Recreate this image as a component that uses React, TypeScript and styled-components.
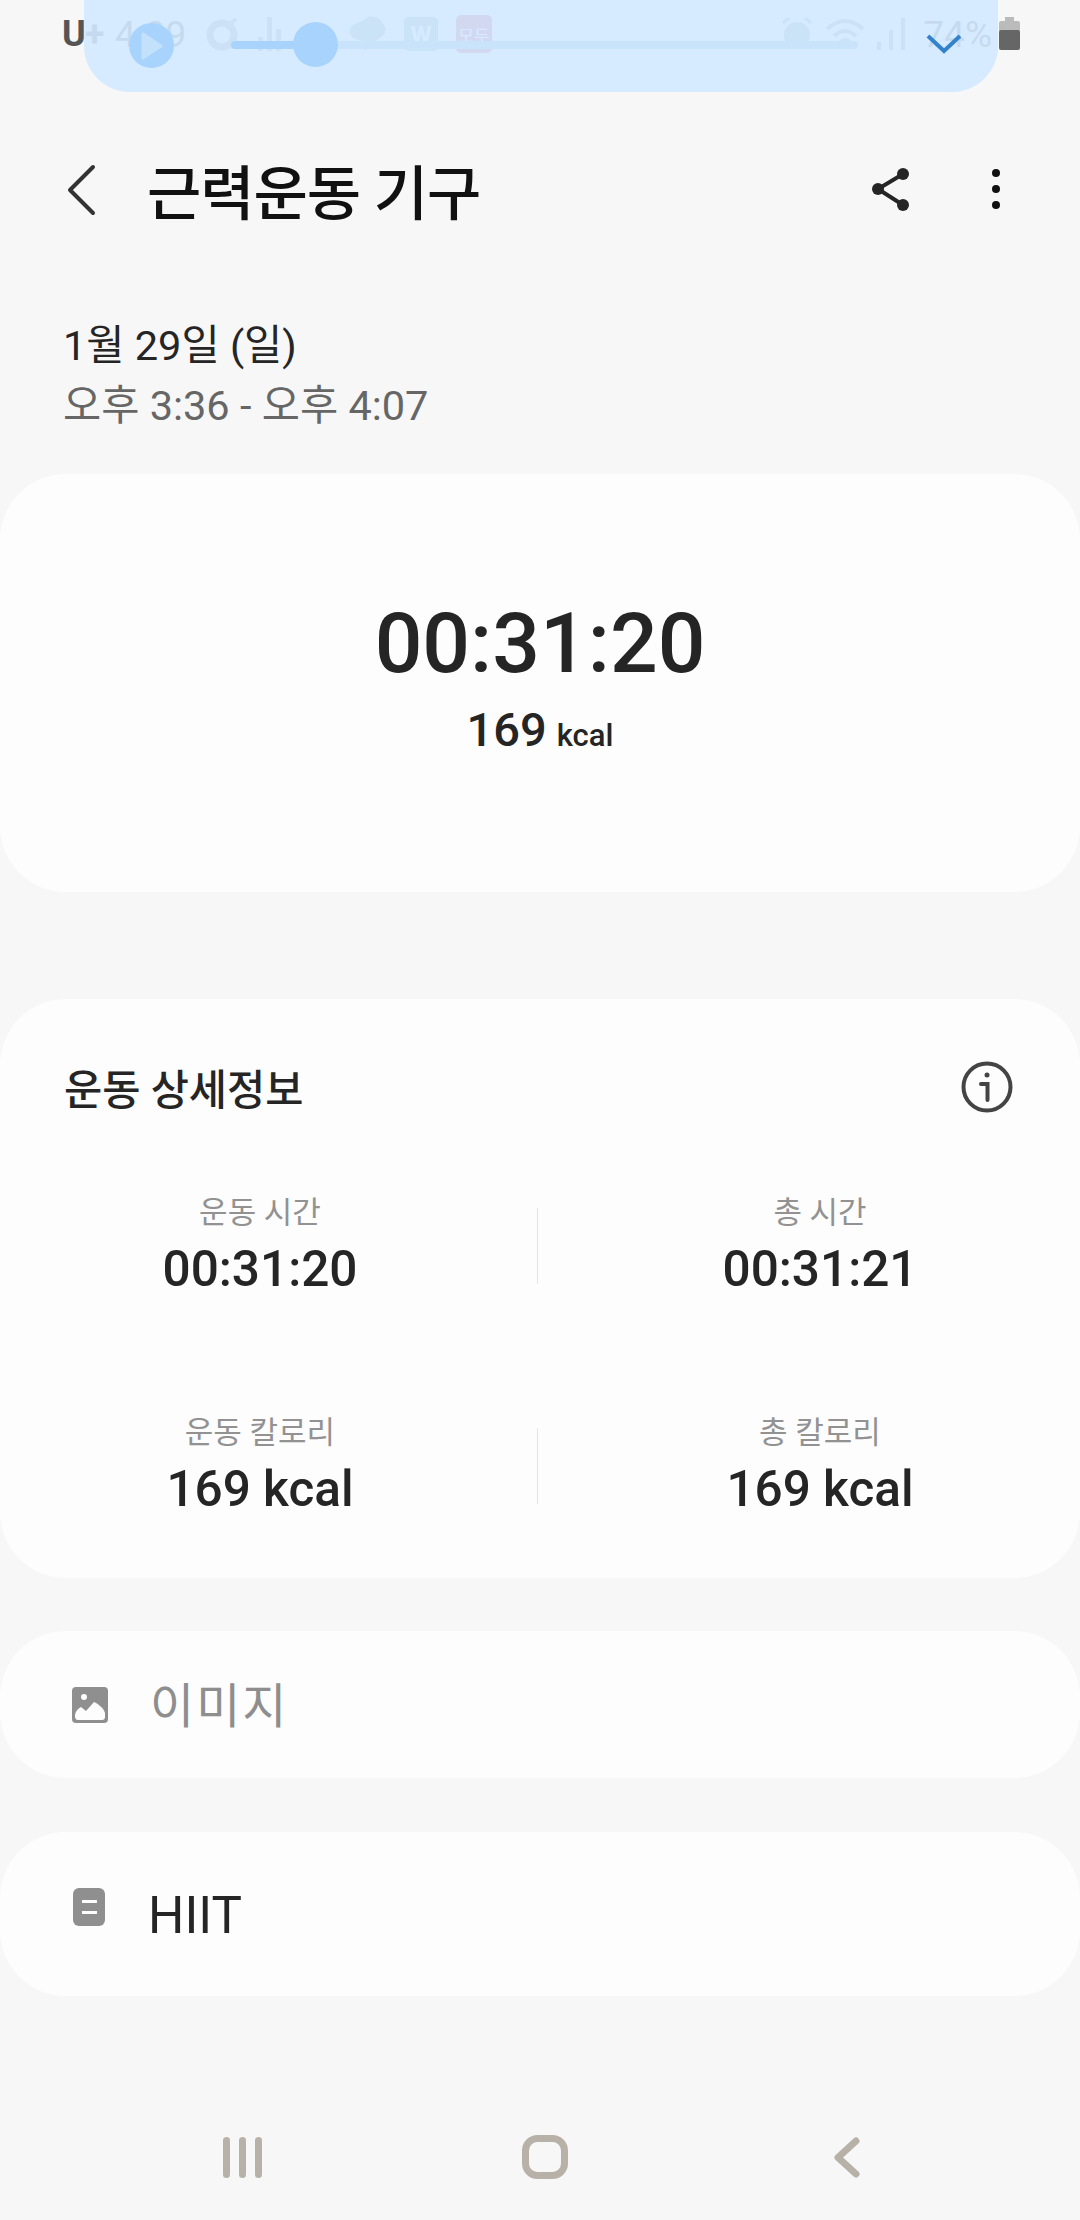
import React from "react";
import styled, { createGlobalStyle } from "styled-components";

const Global = createGlobalStyle`
  html, body { margin: 0; padding: 0; background: #f7f7f7; }
  body { font-family: Roboto, "Noto Sans CJK KR", sans-serif; }
  * { box-sizing: border-box; }
`;

const Page = styled.div`
  position: relative;
  width: 1080px;
  height: 2220px;
  overflow: hidden;
  background: #f7f7f7;
  display: flex;
  flex-direction: column;
`;

const StatusBar = styled.div`
  height: 64px;
  flex: none;
  display: flex;
  align-items: center;
  padding: 4px 60px 0 62px;
  color: #555;
`;
const Carrier = styled.span`
  font-size: 36px;
  font-weight: 700;
  width: 53px;
  letter-spacing: -1px;
`;
const Clock = styled.span`
  font-size: 37px;
  margin-right: 20px;
`;
const StatusIcons = styled.div<{ $gap: number }>`
  display: flex;
  align-items: center;
  gap: ${(p) => p.$gap}px;
`;
const Spacer = styled.div`
  flex: 1;
`;
const Battery = styled.span`
  margin-left: 7px;
  display: flex;
`;
const Percent = styled.span`
  font-size: 37px;
  margin-left: 16px;
`;

const Overlay = styled.div`
  position: absolute;
  left: 84px;
  top: 0;
  width: 914px;
  height: 92px;
  background: rgba(209, 233, 255, 0.9);
  border-radius: 0 0 46px 46px;
`;
const PlayButton = styled.div`
  position: absolute;
  left: 45px;
  top: 23px;
  width: 45px;
  height: 45px;
  border-radius: 50%;
  background: #a8d3fd;
  display: flex;
  align-items: center;
  justify-content: center;
`;
const SliderTrack = styled.div`
  position: absolute;
  left: 147px;
  top: 41px;
  width: 627px;
  height: 8px;
  border-radius: 4px;
  background: #c9e3fa;
`;
const SliderFill = styled.div`
  height: 100%;
  border-radius: 4px;
  background: #a8d3fd;
`;
const SliderThumb = styled.div`
  position: absolute;
  left: 62px;
  top: -19px;
  width: 45px;
  height: 45px;
  border-radius: 50%;
  background: #a8d3fd;
`;
const Collapse = styled.svg`
  position: absolute;
  left: 842px;
  top: 33px;
`;

const Header = styled.header`
  height: 250px;
  flex: none;
  display: flex;
  align-items: center;
  padding: 0 0 0 65px;
`;
const Title = styled.h1`
  margin: 0 0 0 50px;
  font-size: 59px;
  font-weight: 500;
  color: #111;
  flex: 1;
  letter-spacing: -1px;
`;
const HeaderActions = styled.div`
  display: flex;
  align-items: center;
  gap: 81px;
  padding-right: 80px;
`;
const BackIcon = styled.svg`
  flex: none;
  margin-top: 2px;
`;

const DateBlock = styled.div`
  padding: 2px 63px 0;
  height: 160px;
  flex: none;
`;
const DateLine = styled.div`
  font-size: 41.5px;
  line-height: 60px;
  color: #252525;
`;
const TimeLine = styled.div`
  font-size: 41.5px;
  line-height: 60px;
  color: #666;
`;

const Card = styled.section`
  background: #fdfdfd;
  border-radius: 66px;
`;
const SummaryCard = styled(Card)`
  height: 418px;
  margin-bottom: 107px;
  display: flex;
  flex-direction: column;
  align-items: center;
  padding-top: 122px;
`;
const Duration = styled.div`
  font-size: 84px;
  font-weight: 500;
  line-height: 96px;
  color: #252525;
`;
const Calories = styled.div`
  font-size: 47px;
  font-weight: 500;
  line-height: 60px;
  margin-top: 8px;
  color: #252525;
`;
const Unit = styled.span`
  font-size: 31px;
  margin-left: 10px;
`;

const DetailCard = styled(Card)`
  height: 579px;
  margin-bottom: 53px;
  padding-top: 56px;
`;
const DetailHeader = styled.div`
  display: flex;
  align-items: center;
  justify-content: space-between;
  height: 64px;
  padding: 0 67px 0 64px;
`;
const DetailTitle = styled.h2`
  margin: 0;
  font-size: 41.5px;
  font-weight: 500;
  color: #252525;
`;
const StatRow = styled.div<{ $top: number }>`
  display: grid;
  grid-template-columns: 520px 34px 532px;
  align-items: center;
  margin-top: ${(p) => p.$top}px;
`;
const Stat = styled.div`
  display: flex;
  flex-direction: column;
  align-items: center;
`;
const StatLabel = styled.div`
  font-size: 31px;
  line-height: 44px;
  color: #929292;
`;
const StatValue = styled.div`
  font-size: 49.5px;
  font-weight: 500;
  line-height: 68px;
  color: #252525;
`;
const Divider = styled.div`
  justify-self: center;
  width: 1px;
  height: 76px;
  margin-top: -2px;
  background: #e4e4e4;
`;

const ListRow = styled(Card)<{ $h: number; $mb: number }>`
  height: ${(p) => p.$h}px;
  margin-bottom: ${(p) => p.$mb}px;
  display: flex;
  align-items: center;
  padding-left: 72px;
`;
const ImageIcon = styled.svg`
  flex: none;
  margin-right: 42px;
`;
const NoteIcon = styled.svg`
  flex: none;
  margin: -14px 41px 0 1px;
`;
const RowPlaceholder = styled.span`
  font-size: 48px;
  color: #8e8e8e;
  letter-spacing: 2px;
  margin-top: -5px;
`;
const RowText = styled.span`
  font-size: 51px;
  color: #252525;
  margin-top: 2px;
`;

const NavBar = styled.nav`
  margin-top: auto;
  height: 85px;
  flex: none;
  padding: 0 0 0 92px;
  display: grid;
  grid-template-columns: repeat(3, 302px);
  justify-items: center;
  align-items: center;
  padding-bottom: 42px;
`;

const stats = [
  [
    { label: "운동 시간", value: "00:31:20" },
    { label: "총 시간", value: "00:31:21" },
  ],
  [
    { label: "운동 칼로리", value: "169 kcal" },
    { label: "총 칼로리", value: "169 kcal" },
  ],
];

export default function App() {
  return (
    <Page>
      <Global />
      <StatusBar>
        <Carrier>U+</Carrier>
        <Clock>4:09</Clock>
        <StatusIcons $gap={18}>
          <svg width="34" height="36" viewBox="0 0 34 36">
            <circle cx="16" cy="19" r="12" fill="none" stroke="#999" strokeWidth="7" />
            <path d="M20 12 L30 3" stroke="#999" strokeWidth="4" />
          </svg>
          <svg width="24" height="34" viewBox="0 0 24 34" fill="#999">
            <rect x="0" y="20" width="5" height="14" />
            <rect x="9" y="0" width="5" height="34" />
            <rect x="18" y="12" width="5" height="22" />
          </svg>
          <svg width="30" height="34" viewBox="0 0 30 34" fill="#999">
            <path d="M4 30 L24 6 L28 10 L12 34 Z" />
          </svg>
          <svg width="38" height="38" viewBox="0 0 38 38" fill="#8aa">
            <path d="M20 2 C30 0 34 6 38 14 C36 24 26 24 24 30 L16 36 L18 26 C6 26 0 20 2 14 C4 8 14 8 20 2 Z" />
          </svg>
          <svg width="34" height="34" viewBox="0 0 34 34">
            <rect width="34" height="34" rx="5" fill="#8aa" />
            <text x="17" y="26" textAnchor="middle" fontSize="24" fontWeight="700" fill="#fff" fontFamily="Roboto">W</text>
          </svg>
          <svg width="36" height="38" viewBox="0 0 36 38">
            <rect width="36" height="38" rx="5" fill="#d0406a" />
            <text x="18" y="27" textAnchor="middle" fontSize="17" fill="#fff" fontFamily="Noto Sans CJK KR">모두</text>
          </svg>
        </StatusIcons>
        <Spacer />
        <StatusIcons $gap={12}>
          <svg width="32" height="34" viewBox="0 0 32 34" fill="#8aa">
            <circle cx="16" cy="18" r="13" />
            <path d="M2 6 L8 1 M30 6 L24 1" stroke="#8aa" strokeWidth="3" />
          </svg>
          <svg width="40" height="34" viewBox="0 0 40 34" fill="none" stroke="#999" strokeWidth="4">
            <path d="M2 12 Q20 -4 38 12 M9 19 Q20 9 31 19 M15 25 Q20 21 25 25" />
          </svg>
          <svg width="30" height="32" viewBox="0 0 30 32" fill="#999">
            <rect x="0" y="24" width="4" height="8" />
            <rect x="12" y="12" width="4" height="20" />
            <rect x="24" y="0" width="4" height="32" />
          </svg>
        </StatusIcons>
        <Percent>74%</Percent>
        <Battery>
          <svg width="21" height="34" viewBox="0 0 21 34">
            <rect x="6" y="0" width="9" height="4" fill="#bbb" />
            <rect x="0" y="4" width="21" height="11" rx="2" fill="#bbb" />
            <rect x="0" y="13" width="21" height="20" rx="2" fill="#666" />
          </svg>
        </Battery>
      </StatusBar>
      <Overlay>
        <PlayButton>
          <svg width="24" height="30" viewBox="0 0 24 30">
            <path d="M3 3 L21 15 L3 27 Z" fill="#c4e1fb" stroke="#c4e1fb" strokeWidth="3" strokeLinejoin="round" />
          </svg>
        </PlayButton>
        <SliderTrack>
          <SliderFill style={{ width: "14%" }} />
          <SliderThumb />
        </SliderTrack>
        <Collapse width="36" height="22" viewBox="0 0 36 22" fill="none" stroke="#3383cc" strokeWidth="4">
          <path d="M2 3 L18 18 L34 3" />
        </Collapse>
      </Overlay>

      <Header>
        <BackIcon width="32" height="52" viewBox="0 0 32 52" fill="none" stroke="#333" strokeWidth="4" strokeLinecap="round" strokeLinejoin="round">
          <path d="M28 3 L5 26 L28 49" />
        </BackIcon>
        <Title>근력운동 기구</Title>
        <HeaderActions>
          <svg width="40" height="44" viewBox="0 0 40 44" fill="#252525">
            <circle cx="32" cy="7" r="6" />
            <circle cx="7" cy="22" r="6" />
            <circle cx="32" cy="38" r="6" />
            <path d="M32 7 L7 22 L32 38" fill="none" stroke="#252525" strokeWidth="4" />
          </svg>
          <svg width="8" height="40" viewBox="0 0 8 40" fill="#111">
            <circle cx="4" cy="4" r="4" />
            <circle cx="4" cy="20" r="4" />
            <circle cx="4" cy="36" r="4" />
          </svg>
        </HeaderActions>
      </Header>

      <DateBlock>
        <DateLine>1월 29일 (일)</DateLine>
        <TimeLine>오후 3:36 - 오후 4:07</TimeLine>
      </DateBlock>

      <SummaryCard>
        <Duration>00:31:20</Duration>
        <Calories>
          169<Unit>kcal</Unit>
        </Calories>
      </SummaryCard>

      <DetailCard>
        <DetailHeader>
          <DetailTitle>운동 상세정보</DetailTitle>
          <svg width="52" height="52" viewBox="0 0 52 52" fill="none" stroke="#444" strokeWidth="4" strokeLinecap="round">
            <circle cx="26" cy="26" r="23.5" />
            <path d="M20 23 H26.500 V39" />
            <circle cx="26" cy="14" r="2.500" fill="#444" stroke="none" />
          </svg>
        </DetailHeader>
        {stats.map((row, i) => (
          <StatRow key={row[0].label} $top={i === 0 ? 72 : 108}>
            <Stat>
              <StatLabel>{row[0].label}</StatLabel>
              <StatValue>{row[0].value}</StatValue>
            </Stat>
            <Divider />
            <Stat>
              <StatLabel>{row[1].label}</StatLabel>
              <StatValue>{row[1].value}</StatValue>
            </Stat>
          </StatRow>
        ))}
      </DetailCard>

      <ListRow $h={147} $mb={54}>
        <ImageIcon width="36" height="36" viewBox="0 0 36 36">
          <rect width="36" height="36" rx="4" fill="#8f8f8f" />
          <circle cx="12" cy="10" r="3" fill="#fdfdfd" />
          <path d="M3 29 C3 24 7 21 9 20 L14 24 L22 15 C26 17 32 21 33 26 L33 30 Q33 33 30 33 L6 33 Q3 33 3 29 Z" fill="#fdfdfd" />
        </ImageIcon>
        <RowPlaceholder>이미지</RowPlaceholder>
      </ListRow>

      <ListRow $h={164} $mb={0}>
        <NoteIcon width="34" height="38" viewBox="0 0 34 38">
          <rect width="32" height="38" rx="6" fill="#8f8f8f" />
          <rect x="9" y="12" width="15" height="3" fill="#fdfdfd" />
          <rect x="9" y="23" width="15" height="3" fill="#fdfdfd" />
        </NoteIcon>
        <RowText>HIIT</RowText>
      </ListRow>

      <NavBar>
        <svg width="40" height="41" viewBox="0 0 40 41" fill="#b8b1a8">
          <rect x="0" y="0" width="7" height="41" rx="3.500" />
          <rect x="16" y="0" width="7" height="41" rx="3.500" />
          <rect x="32" y="0" width="7" height="41" rx="3.500" />
        </svg>
        <svg width="46" height="44" viewBox="0 0 46 44" fill="none" stroke="#b8b1a8" strokeWidth="7">
          <rect x="3.500" y="3.500" width="39" height="37" rx="12" />
        </svg>
        <svg width="28" height="41" viewBox="0 0 28 41" fill="none" stroke="#b8b1a8" strokeWidth="7" strokeLinecap="round" strokeLinejoin="round">
          <path d="M23 4 L5 20.500 L23 37" />
        </svg>
      </NavBar>
    </Page>
  );
}
